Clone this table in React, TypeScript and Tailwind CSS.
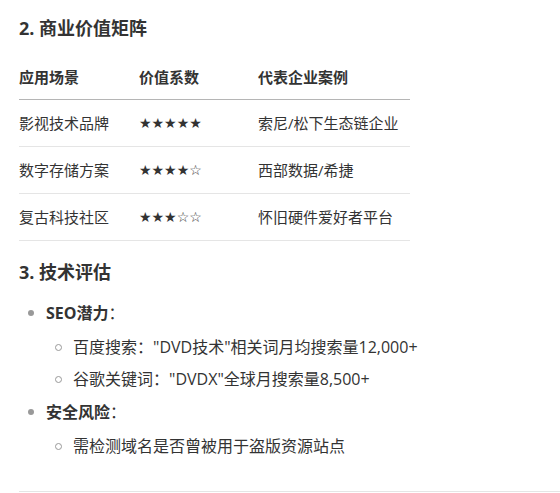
const font = "font-['Segoe_UI','Open_Sans','Noto_Sans_CJK_SC',sans-serif]";

const rows = [
  { scene: "影视技术品牌", stars: "★★★★★", cases: "索尼/松下生态链企业" },
  { scene: "数字存储方案", stars: "★★★★☆", cases: "西部数据/希捷" },
  { scene: "复古科技社区", stars: "★★★☆☆", cases: "怀旧硬件爱好者平台" },
];

function Disc() {
  return <span className="ml-[9px] mr-[12px] h-[6px] w-[6px] shrink-0 rounded-full bg-[#999]" />;
}

function Circle() {
  return <span className="ml-[36px] mr-[11px] h-[7px] w-[7px] shrink-0 rounded-full border border-[#999]" />;
}

export default function App() {
  return (
    <div className={`${font} min-h-[493px] w-[560px] bg-white pl-[19px] text-[#333]`}>
      <h2 className="pt-[16px] text-[18px] font-bold leading-[24px]">2. 商业价值矩阵</h2>

      {/* 表格 */}
      <table className="mt-[15px] w-[391px] border-collapse text-[15px]">
        <thead>
          <tr className="border-b border-[#b5b5b5]">
            <th className="w-[120px] py-[11px] text-left font-bold leading-[22px]">应用场景</th>
            <th className="w-[119px] py-[11px] text-left font-bold leading-[22px]">价值系数</th>
            <th className="py-[11px] text-left font-bold leading-[22px]">代表企业案例</th>
          </tr>
        </thead>
        <tbody>
          {rows.map((r) => (
            <tr key={r.scene} className="border-b border-[#e5e5e5]">
              <td className="py-[12px] leading-[22px]">{r.scene}</td>
              <td className="py-[12px] font-['DejaVu_Sans',sans-serif] text-[14px] leading-[22px]">{r.stars}</td>
              <td className="py-[12px] leading-[22px]">{r.cases}</td>
            </tr>
          ))}
        </tbody>
      </table>

      <h2 className="mt-[19px] text-[18px] font-bold leading-[24px]">3. 技术评估</h2>

      {/* 列表 */}
      <ul className="mt-[17px] text-[16px] leading-[24px]">
        <li>
          <div className="flex items-center">
            <Disc />
            <span><b>SEO潜力</b>：</span>
          </div>
          <ul className="mt-[10px] flex flex-col gap-[8px]">
            <li className="flex items-center">
              <Circle />
              <span>百度搜索："DVD技术"相关词月均搜索量12,000+</span>
            </li>
            <li className="flex items-center">
              <Circle />
              <span>谷歌关键词："DVDX"全球月搜索量8,500+</span>
            </li>
          </ul>
        </li>
        <li className="mt-[9px]">
          <div className="flex items-center">
            <Disc />
            <span><b>安全风险</b>：</span>
          </div>
          <ul className="mt-[10px]">
            <li className="flex items-center">
              <Circle />
              <span>需检测域名是否曾被用于盗版资源站点</span>
            </li>
          </ul>
        </li>
      </ul>

      <hr className="mt-[33px] border-[#e5e5e5]" />
    </div>
  );
}
